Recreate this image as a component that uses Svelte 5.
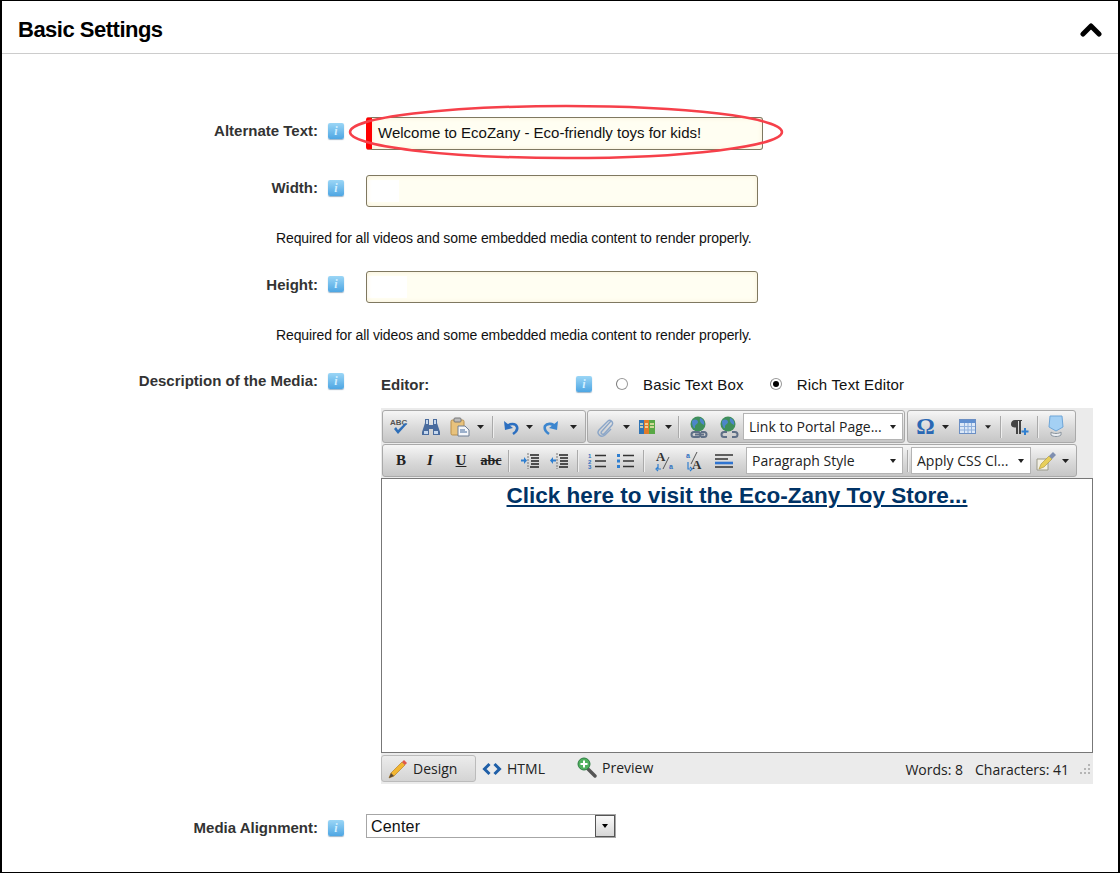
<script>
	const group1 = [
		['spell', 30], ['find', 32], ['paste', 26], ['arrow', 14], ['sep', 10],
		['undo', 28], ['arrow', 8], ['redo', 36], ['arrow', 8]
	];
	const group2 = [
		['clip', 30], ['arrow', 12], ['books', 30], ['arrow', 12], ['sep', 8], ['link', 34], ['unlink', 25]
	];
	const group3 = [
		['omega', 31], ['arrow', 8], ['table', 36], ['arrow', 6], ['sep', 18], ['para', 20], ['sep', 16], ['shape', 22]
	];
	const format = [
		['bold', 32], ['italic', 26], ['under', 36], ['strike', 24], ['sep', 10], ['indent', 34], ['outdent', 24],
		['sep', 12], ['ol', 28], ['ul', 28], ['sep', 8], ['ltr', 36], ['rtl', 24], ['align', 34]
	];
</script>

{#snippet info()}
	<span class="info"><i>i</i></span>
{/snippet}

{#snippet tool(name, w)}
	<span class="tool" style="width: {w}px">
		{#if name === 'sep'}
			<span class="sep"></span>
		{:else if name === 'arrow'}
			<svg width="7" height="4" viewBox="0 0 7 4"><path d="M0 0h7L3.500 4z" fill="#222" /></svg>
		{:else if name === 'spell'}
			<svg width="22" height="22" viewBox="0 0 22 22">
				<text x="1" y="9" font-size="8" font-weight="700" fill="#555" font-family="Liberation Sans">ABC</text>
				<path d="M5 13l4 5 9-10-2-1-7 7-2-3z" fill="#2f6fb8" />
			</svg>
		{:else if name === 'find'}
			<svg width="20" height="20" viewBox="0 0 20 20">
				<path d="M4 2h4v6h4V2h4v4l3 9v3h-7v-6H8v6H1v-3l3-9z" fill="#4a6c9e" />
				<path d="M3 14h4v3H3zM13 14h4v3h-4zM5 3h2v4H5zM13 3h2v4h-2z" fill="#c6d8ee" />
			</svg>
		{:else if name === 'paste'}
			<svg width="20" height="20" viewBox="0 0 20 20">
				<rect x="1" y="3" width="13" height="15" rx="1.500" fill="#e8c27c" stroke="#b98f4a" />
				<rect x="4" y="1" width="7" height="4" rx="1" fill="#bbb" stroke="#777" />
				<path d="M8 9h7l4 4v6H8z" fill="#f4f6fa" stroke="#6f7f95" />
				<path d="M10 13h5M10 15h7" stroke="#456a9c" />
			</svg>
		{:else if name === 'undo'}
			<svg width="18" height="18" viewBox="0 0 18 18">
				<path d="M5 9c2-4 9-4 10 0 1 3-1 5-4 7" fill="none" stroke="#2c6fc0" stroke-width="2.600" />
				<path d="M2 3l1 9 8-2z" fill="#2c6fc0" />
			</svg>
		{:else if name === 'redo'}
			<svg width="18" height="18" viewBox="0 0 18 18">
				<path d="M13 9C11 5 5 5 3 8c-1 3 1 6 4 8" fill="none" stroke="#3c86cf" stroke-width="2.600" />
				<path d="M16 3l-1 9-8-2z" fill="#3c86cf" />
			</svg>
		{:else if name === 'clip'}
			<svg width="18" height="20" viewBox="0 0 18 20">
				<path d="M15 4 6 14c-2 2 0 4 2 3l8-9c2-3-2-6-4-4L3 13c-3 4 2 8 6 5l6-6" fill="none" stroke="#8ba6c8" stroke-width="1.400" />
			</svg>
		{:else if name === 'books'}
			<svg width="18" height="16" viewBox="0 0 18 16">
				<rect x="1" y="1" width="5" height="14" fill="#2f74b5" />
				<rect x="6" y="1" width="5" height="14" fill="#e07b2a" />
				<rect x="11" y="1" width="6" height="14" fill="#58a845" />
				<path d="M2 5h3M7 5h3M12 5h4M2 8h3M7 8h3M12 8h4" stroke="#f5e9b0" stroke-width="1.500" />
			</svg>
		{:else if name === 'link' || name === 'unlink'}
			<svg width="22" height="24" viewBox="0 0 22 24">
				<circle cx="10" cy="9" r="7.500" fill="#3f8f5a" />
				<path d="M4 6c3-3 6-1 6 1s-3 2-3 5-3 0-3-6zM12 3c3 1 5 4 4 7-2-1-5-3-4-7z" fill="#4d86c9" />
				{#if name === 'link'}
					<path d="M6 17h4a2.500 2.500 0 0 1 0 5H6a2.500 2.500 0 0 1 0-5zM13 17h3a2.500 2.500 0 0 1 0 5h-3" fill="none" stroke="#5e6f86" stroke-width="2" />
					<path d="M7 19.500h9" stroke="#5e6f86" stroke-width="2" />
				{:else}
					<path d="M9 17H6a2.500 2.500 0 0 0 0 5h3M14 17h3a2.500 2.500 0 0 1 0 5h-3" fill="none" stroke="#5e6f86" stroke-width="2" />
				{/if}
			</svg>
		{:else if name === 'omega'}
			<span class="omega">Ω</span>
		{:else if name === 'table'}
			<svg width="17" height="15" viewBox="0 0 17 15">
				<rect x=".5" y=".5" width="16" height="14" fill="#dce8f7" stroke="#6b8fc4" />
				<rect x="1" y="1" width="15" height="3" fill="#5f8fd0" />
				<path d="M1 7.500h15M1 11h15M5.500 4v10M9 4v10M12.500 4v10" stroke="#8fb0dc" />
			</svg>
		{:else if name === 'para'}
			<svg width="20" height="18" viewBox="0 0 20 18">
				<path d="M6 2h7v1h-1v13h-2V3H9v13H7V9.500C3 9.500 2 8 2 6s1.500-4 4-4z" fill="#444" />
				<path d="M15 10h2v2.500h2.500v2H17V17h-2v-2.500h-2.500v-2H15z" fill="#2f7fd0" />
			</svg>
		{:else if name === 'shape'}
			<svg width="18" height="24" viewBox="0 0 18 24">
				<path d="M3 1h12l1 11-7 4-7-4z" fill="#a4d0f4" stroke="#6fa6d8" />
				<path d="M4 17c2 2 8 2 10 0v3c-2 2-8 2-10 0z" fill="#eceff3" stroke="#8a949e" />
			</svg>
		{:else if name === 'bold'}
			<span class="fmt bold">B</span>
		{:else if name === 'italic'}
			<span class="fmt italic">I</span>
		{:else if name === 'under'}
			<span class="fmt under">U</span>
		{:else if name === 'strike'}
			<span class="fmt strike">abc</span>
		{:else if name === 'indent' || name === 'outdent'}
			<svg width="20" height="18" viewBox="0 0 20 18">
				<path d="M10 3h9M11 6h8M11 9h8M11 12h8M10 15h9" stroke="#222" stroke-width="1.400" />
				<path d="M8 1v16" stroke="#777" stroke-dasharray="2 1" />
				<path d={name === 'indent' ? 'M1 7.500h3V5l3 3.500L4 12V9.500H1z' : 'M7 7.500H4V5L1 8.500 4 12V9.500h3z'} fill="#2f7fd0" />
			</svg>
		{:else if name === 'ol'}
			<svg width="20" height="18" viewBox="0 0 20 18">
				<path d="M8 3.500h11M8 9h11M8 14.500h11" stroke="#333" stroke-width="1.600" />
				<text x="1" y="6" font-size="6" font-weight="700" fill="#2f6fc0" font-family="Liberation Sans">1</text>
				<text x="1" y="11.500" font-size="6" font-weight="700" fill="#2f6fc0" font-family="Liberation Sans">2</text>
				<text x="1" y="17" font-size="6" font-weight="700" fill="#2f6fc0" font-family="Liberation Sans">3</text>
			</svg>
		{:else if name === 'ul'}
			<svg width="20" height="18" viewBox="0 0 20 18">
				<path d="M8 3.500h11M8 9h11M8 14.500h11" stroke="#333" stroke-width="1.600" />
				<path d="M2 2h3v3H2zM2 7.500h3v3H2zM2 13h3v3H2z" fill="#2f7fd0" />
			</svg>
		{:else if name === 'ltr' || name === 'rtl'}
			<svg width="20" height="22" viewBox="0 0 20 22">
				{#if name === 'ltr'}
					<text x="1" y="11" font-size="13" font-weight="700" fill="#333" font-family="Liberation Serif">A</text>
					<path d="M14 7 8 19" stroke="#555" />
					<text x="14" y="19" font-size="7" font-weight="700" fill="#2f6fc0" font-family="Liberation Sans">a</text>
					<path d="M3 14v5h3M3 21l-2-2 2-2" fill="none" stroke="#2f7fd0" stroke-width="1.200" />
				{:else}
					<text x="7" y="19" font-size="13" font-weight="700" fill="#333" font-family="Liberation Serif">A</text>
					<path d="M12 2 6 14" stroke="#555" />
					<text x="1" y="8" font-size="7" font-weight="700" fill="#2f6fc0" font-family="Liberation Sans">a</text>
					<path d="M3 12v7h2M5 21l2-2-2-2" fill="none" stroke="#2f7fd0" stroke-width="1.200" />
				{/if}
			</svg>
		{:else if name === 'align'}
			<svg width="20" height="16" viewBox="0 0 20 16">
				<path d="M1 2h18M1 6h13M1 14h18" stroke="#333" stroke-width="1.600" />
				<path d="M1 10h18" stroke="#2f74d0" stroke-width="2.600" />
			</svg>
		{/if}
	</span>
{/snippet}

<div class="panel">
	<header class="head">
		<h2>Basic Settings</h2>
		<svg width="22" height="15" viewBox="0 0 22 15">
			<path d="M3 12 11 4l8 8" fill="none" stroke="#000" stroke-width="5" stroke-linejoin="round" stroke-linecap="round" />
		</svg>
	</header>

	<div class="form">
		<div class="row first">
			<label>Alternate Text:</label>
			{@render info()}
			<div class="alt-wrap">
				<div class="input alt">Welcome to EcoZany - Eco-friendly toys for kids!</div>
				<svg class="ring" width="436" height="56" viewBox="0 0 436 56">
					<ellipse cx="218" cy="28" rx="216" ry="26" fill="none" stroke="#f6404a" stroke-width="2.500" />
				</svg>
			</div>
		</div>

		<div class="row">
			<label>Width:</label>
			{@render info()}
			<div class="input short patch-a"></div>
		</div>
		<p class="hint">Required for all videos and some embedded media content to render properly.</p>

		<div class="row">
			<label class="lower">Height:</label>
			{@render info()}
			<div class="input short patch-b"></div>
		</div>
		<p class="hint low">Required for all videos and some embedded media content to render properly.</p>

		<div class="row desc">
			<label>Description of the Media:</label>
			{@render info()}
			<div class="editor-col">
				<div class="mode">
					<strong class="ed-label">Editor:</strong>
					{@render info()}
					<span class="radio"></span>
					<span class="mode-text">Basic Text Box</span>
					<span class="radio on"></span>
					<span class="mode-text">Rich Text Editor</span>
				</div>

				<div class="editor">
					<div class="bars">
						<div class="bar">
							<div class="group g1">
								{#each group1 as [name, w]}{@render tool(name, w)}{/each}
							</div>
							<div class="group g2">
								{#each group2 as [name, w]}{@render tool(name, w)}{/each}
								<div class="pick link-pick">Link to Portal Page...<span class="caret"></span></div>
							</div>
							<div class="group g3">
								{#each group3 as [name, w]}{@render tool(name, w)}{/each}
							</div>
						</div>
						<div class="bar">
							<div class="group g4">
								{#each format as [name, w]}{@render tool(name, w)}{/each}
								<div class="pick para-pick">Paragraph Style<span class="caret"></span></div>
								{@render tool('sep', 8)}
								<div class="pick css-pick">Apply CSS Cl...<span class="caret"></span></div>
								<span class="tool" style="width: 30px">
									<svg width="22" height="22" viewBox="0 0 22 22">
										<path d="M2 9h11v11H2z" fill="#f4f1e4" stroke="#9a9a8a" />
										<path d="M6 14 14 6l3 3-8 8-5 2z" fill="#e8cf5a" stroke="#a8923a" stroke-width=".6" />
										<path d="m14 6 4-4 3 3-4 4z" fill="#7f8fb0" />
									</svg>
								</span>
								{@render tool('arrow', 8)}
							</div>
						</div>
					</div>

					<div class="content">
						<a href="#top">Click here to visit the Eco-Zany Toy Store...</a>
					</div>

					<div class="foot">
						<span class="tab active">
							<svg width="20" height="20" viewBox="0 0 20 20">
								<path d="M3 14 14 3l3 3L6 17l-5 2z" fill="#f2b632" stroke="#b8822a" stroke-width=".7" />
								<path d="m14 3 2-2 3 3-2 2z" fill="#e0584a" />
								<path d="m3 14 3 3-5 2z" fill="#5a4a38" />
							</svg>
							Design
						</span>
						<span class="tab html">
							<svg width="20" height="14" viewBox="0 0 20 14">
								<path d="M7.500 2 2.500 7l5 5M12.500 2l5 5-5 5" fill="none" stroke="#1f5fa8" stroke-width="3" />
							</svg>
							HTML
						</span>
						<span class="tab preview">
							<svg width="21" height="21" viewBox="0 0 21 21">
								<path d="m12 12 7 7" stroke="#555" stroke-width="3.400" stroke-linecap="round" />
								<circle cx="8" cy="7" r="6" fill="#4fb05e" stroke="#2e7d43" />
								<path d="M8 3.500v7M4.500 7h7" stroke="#fff" stroke-width="2" />
							</svg>
							Preview
						</span>
						<span class="counts">Words: 8</span>
						<span class="counts chars">Characters: 41</span>
						<svg class="grip" width="12" height="12" viewBox="0 0 12 12">
							<path d="M9 1h2v2H9zM5 5h2v2H5zM9 5h2v2H9zM1 9h2v2H1zM5 9h2v2H5zM9 9h2v2H9z" fill="#b5b5b5" />
						</svg>
					</div>
				</div>
			</div>
		</div>

		<div class="row align">
			<label>Media Alignment:</label>
			{@render info()}
			<div class="select">
				<span class="value">Center</span>
				<span class="drop"><span class="caret dark"></span></span>
			</div>
		</div>
	</div>
</div>

<style>
	:global(body) {
		background: #fff;
	}
	.panel {
		box-sizing: border-box;
		width: 1120px;
		height: 873px;
		border: 2px solid #000;
		border-width: 1px 2px;
		overflow: hidden;
		font-family: "Liberation Sans", Arial, sans-serif;
		color: #000;
	}
	.head {
		height: 53px;
		box-sizing: border-box;
		border-bottom: 1px solid #ccc;
		display: flex;
		align-items: center;
		justify-content: space-between;
		padding: 5px 16px 0 16px;
	}
	.head h2 {
		margin: 0;
		font-size: 22px;
		font-weight: 700;
		letter-spacing: -0.5px;
	}
	.form {
		padding-top: 63px;
	}
	.row {
		display: flex;
		align-items: flex-start;
	}
	.row + .row,
	.hint + .row {
		margin-top: 24px;
	}
	.row label {
		width: 316px;
		text-align: right;
		font-size: 15px;
		font-weight: 700;
		color: #333;
		line-height: 16px;
		margin-top: 6px;
		flex: none;
	}
	.row label.lower {
		margin-top: 7px;
	}
	.info {
		flex: none;
		box-sizing: border-box;
		width: 16px;
		height: 16px;
		margin: 6px 22px 0 10px;
		border-radius: 2px;
		background: linear-gradient(#9bd6f6, #4ea6e3);
		box-shadow: 0 1px 1px rgba(60, 110, 150, 0.5);
		display: flex;
		align-items: center;
		justify-content: center;
		color: #d4f0ff;
		font: italic 700 12px "Liberation Serif", serif;
		line-height: 16px;
	}
	.info i {
		font-style: inherit;
	}
	.input {
		box-sizing: border-box;
		height: 32px;
		width: 392px;
		border: 1px solid #7f7860;
		border-radius: 3px;
		background-color: #fffef2;
		box-shadow: inset 0 0 5px #f8efd6;
		flex: none;
	}
	.short {
		margin-top: 1px;
	}
	.patch-a {
		background-image: linear-gradient(#fff, #fff);
		background-repeat: no-repeat;
		background-size: 32px 22px;
		background-position: 0 4px;
	}
	.patch-b {
		background-image: linear-gradient(#fff, #fff);
		background-repeat: no-repeat;
		background-size: 40px 22px;
		background-position: 0 4px;
	}
	.alt-wrap {
		position: relative;
		flex: none;
	}
	.alt {
		width: 397px;
		height: 33px;
		border-left: 6px solid #f00;
		padding-left: 6px;
		font-size: 15px;
		line-height: 29px;
		color: #111;
	}
	.ring {
		position: absolute;
		left: -18px;
		top: -13px;
	}
	.hint {
		margin: 23px 0 0 274px;
		height: 16px;
		font-size: 14px;
		letter-spacing: -0.11px;
		line-height: 16px;
		color: #111;
	}
	.hint.low {
		margin-top: 24px;
	}
	.editor-col {
		width: 727px;
		flex: none;
		padding-left: 15px;
		box-sizing: border-box;
	}
	.mode {
		height: 34px;
		margin-bottom: 7px;
		display: flex;
		align-items: center;
		font-size: 15px;
	}
	.mode .info {
		margin: 0 24px 0 0;
	}
	.ed-label {
		width: 195px;
		font-size: 15px;
		color: #333;
	}
	.radio {
		box-sizing: border-box;
		width: 12px;
		height: 12px;
		border-radius: 50%;
		border: 1px solid #999;
		background: #fff;
		display: flex;
		align-items: center;
		justify-content: center;
		border-left-color: #777;
		flex: none;
	}
	.radio.on::after {
		content: "";
		width: 6px;
		height: 6px;
		border-radius: 50%;
		background: #000;
	}
	.mode-text {
		margin-left: 15px;
		margin-right: 26px;
		letter-spacing: 0.18px;
		color: #111;
	}
	.editor {
		width: 712px;
	}
	.bars {
		background: #ebebeb;
		height: 70px;
		box-sizing: border-box;
		padding-top: 2px;
		display: flex;
		flex-direction: column;
		gap: 1px;
	}
	.bar {
		display: flex;
		gap: 1px;
		height: 33px;
	}
	.group {
		box-sizing: border-box;
		height: 33px;
		display: flex;
		align-items: center;
		border: 1px solid #a9a9a9;
		border-radius: 3px;
		background: linear-gradient(#f6f6f6, #d9d9d9 55%, #c6c6c6);
		padding-left: 2px;
		flex: none;
	}
	.g1 {
		width: 204px;
		margin-left: 1px;
	}
	.g2 {
		width: 318px;
	}
	.g3 {
		width: 169px;
		margin-left: 1px;
	}
	.g4 {
		width: 695px;
		margin-left: 1px;
	}
	.tool {
		display: flex;
		align-items: center;
		justify-content: center;
		flex: none;
		height: 24px;
		min-width: 0;
	}
	.sep {
		width: 1px;
		height: 22px;
		background: #aaa;
		box-shadow: 1px 0 0 #eee;
	}
	.omega {
		font: 700 23px "Liberation Serif", serif;
		color: #2a68b4;
		line-height: 24px;
	}
	.fmt {
		font-family: "Liberation Serif", serif;
		font-size: 15px;
		font-weight: 700;
		color: #222;
	}
	.italic {
		font-style: italic;
	}
	.under {
		text-decoration: underline;
	}
	.strike {
		text-decoration: line-through;
		font-size: 14px;
	}
	.pick {
		box-sizing: border-box;
		height: 27px;
		border: 1px solid #b4b4b4;
		background: #fff;
		display: flex;
		align-items: center;
		justify-content: space-between;
		padding: 0 6px 0 5px;
		font: 14px "Open Sans", sans-serif;
		color: #222;
		white-space: nowrap;
		flex: none;
	}
	.link-pick {
		width: 160px;
		margin-left: 2px;
	}
	.para-pick {
		width: 157px;
		margin-left: 5px;
	}
	.css-pick {
		width: 120px;
	}
	.caret {
		width: 0;
		height: 0;
		border: 3.500px solid transparent;
		border-top: 4px solid #222;
		border-bottom: 0;
		flex: none;
	}
	.content {
		box-sizing: border-box;
		height: 275px;
		border: 1px solid #777;
		text-align: center;
		padding-top: 3px;
		font-size: 22.500px;
		line-height: 28px;
		font-weight: 700;
	}
	.content a {
		color: #003366;
		text-decoration: underline;
	}
	.foot {
		height: 31px;
		background: #ebebeb;
		display: flex;
		align-items: center;
		font: 14px "Open Sans", sans-serif;
		color: #222;
	}
	.tab {
		display: flex;
		align-items: center;
		gap: 5px;
		flex: none;
	}
	.tab.active {
		box-sizing: border-box;
		width: 95px;
		height: 27px;
		padding-left: 6px;
		border: 1px solid #bbb;
		border-radius: 3px;
		background: linear-gradient(#ececec, #d4d4d4);
	}
	.tab.html {
		margin-left: 6px;
		width: 94px;
	}
	.tab.preview {
		margin-top: -3px;
	}
	.counts {
		flex: none;
		margin-left: auto;
		padding-top: 2px;
	}
	.chars {
		margin-left: 12px;
	}
	.grip {
		margin: 0 2px 0 10px;
		flex: none;
	}
	.row.align {
		margin-top: 30px;
	}
	.select {
		box-sizing: border-box;
		width: 250px;
		height: 24px;
		border: 1px solid #a6a6a6;
		display: flex;
		align-items: center;
		justify-content: space-between;
		padding-left: 4px;
		font-size: 16px;
		color: #111;
		flex: none;
	}
	.value {
		letter-spacing: 0.2px;
		padding-top: 1px;
	}
	.drop {
		box-sizing: border-box;
		width: 20px;
		height: 22px;
		border: 1px solid #555;
		background: linear-gradient(#fafafa, #d6d6d6);
		display: flex;
		align-items: center;
		justify-content: center;
	}
	.caret.dark {
		border-top-color: #000;
	}
</style>
